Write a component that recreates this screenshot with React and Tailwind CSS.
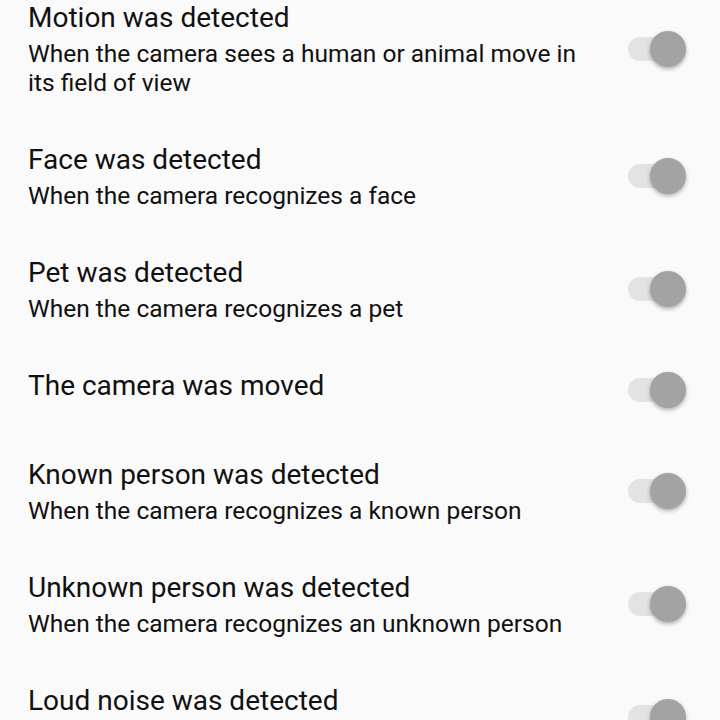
import React from "react";

const items = [
  { title: "Motion was detected", sub: "When the camera sees a human or animal move in its field of view" },
  { title: "Face was detected", sub: "When the camera recognizes a face" },
  { title: "Pet was detected", sub: "When the camera recognizes a pet" },
  { title: "The camera was moved" },
  { title: "Known person was detected", sub: "When the camera recognizes a known person" },
  { title: "Unknown person was detected", sub: "When the camera recognizes an unknown person" },
  { title: "Loud noise was detected", sub: "When the camera hears a loud noise" },
];

function Toggle() {
  return (
    <div className="relative w-[58px] h-[36px] self-center shrink-0">
      <div className="absolute left-0 top-[6px] w-[52px] h-[24px] rounded-full bg-[#e3e3e3]" />
      <div className="absolute right-0 top-0 w-[36px] h-[36px] rounded-full bg-[#a3a3a3] shadow-[0_2px_4px_rgba(0,0,0,0.3)]" />
    </div>
  );
}

export default function App() {
  return (
    <div className="w-[720px] h-[720px] overflow-hidden bg-[#fafafa] font-['Roboto',sans-serif]">
      <div className="mt-[-22.5px]">
        {items.map((it, i) => (
          <div key={i} className="flex items-start justify-between pl-[28px] pr-[34px] py-[22.5px] min-h-[89px]">
            <div className="flex flex-col pr-[30px]">
              <div className="text-[28px] leading-[36px] text-[#111111]">{it.title}</div>
              {it.sub && (
                <div className="mt-[3px] text-[24.5px] leading-[29px] text-[#111111]">{it.sub}</div>
              )}
            </div>
            <Toggle />
          </div>
        ))}
      </div>
    </div>
  );
}
